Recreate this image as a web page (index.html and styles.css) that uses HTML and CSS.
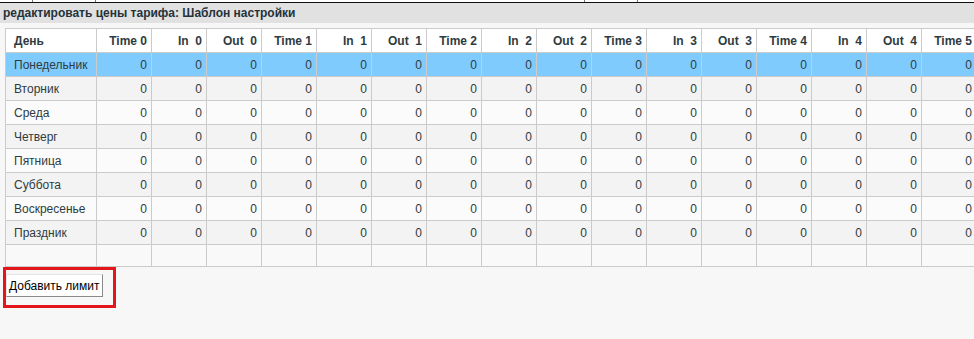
FILE: index.html
```html
<!DOCTYPE html>
<html lang="ru">
<head>
    <meta charset="UTF-8">
    <meta name="viewport" content="width=device-width, initial-scale=1.0">
    <title>Тариф</title>
    <link rel="stylesheet" href="styles.css">
</head>
<body>
    <div id="prev-row">
        <span style="width: 32px"></span>
        <span style="width: 62px"></span>
        <span style="width: 488px"></span>
        <span style="width: 52px"></span>
    </div>

    <div id="panel-title">редактировать цены тарифа: Шаблон настройки</div>

    <div id="grid-wrap">
        <table id="price-grid">
            <colgroup id="grid-cols"></colgroup>
            <thead>
                <tr id="grid-head"></tr>
            </thead>
            <tbody id="grid-body"></tbody>
        </table>
    </div>

    <div id="actions">
        <div class="mark">
            <button type="button" class="add-limit">Добавить лимит</button>
        </div>
    </div>

    <script>
        const days = ['Понедельник', 'Вторник', 'Среда', 'Четверг', 'Пятница', 'Суббота', 'Воскресенье', 'Праздник'];
        // Time/In/Out по периодам, последний период только Time
        const fields = [];
        for (let i = 0; i <= 5; i++) {
            fields.push('Time ' + i);
            if (i < 5) {
                fields.push('In &nbsp;' + i);
                fields.push('Out &nbsp;' + i);
            }
        }

        const cols = document.getElementById('grid-cols');
        const head = document.getElementById('grid-head');
        const body = document.getElementById('grid-body');

        function addCol(width) {
            const col = document.createElement('col');
            col.style.width = width + 'px';
            cols.appendChild(col);
        }

        function addHead(text, cls) {
            const th = document.createElement('th');
            th.innerHTML = text;
            if (cls) th.className = cls;
            head.appendChild(th);
        }

        addCol(91);
        addHead('День', 'day');
        fields.forEach(f => {
            addCol(55);
            addHead(f);
        });

        days.forEach((day, idx) => {
            const tr = document.createElement('tr');
            if (idx === 0) tr.className = 'selected';
            let html = '<td class="day">' + day + '</td>';
            for (let i = 0; i < fields.length; i++) html += '<td>0</td>';
            tr.innerHTML = html;
            body.appendChild(tr);
        });

        // пустая строка для нового дня
        const blank = document.createElement('tr');
        blank.className = 'blank';
        let html = '';
        for (let i = 0; i <= fields.length; i++) html += '<td></td>';
        blank.innerHTML = html;
        body.appendChild(blank);
    </script>
</body>
</html>
```

FILE: styles.css
```css
body {
    margin: 0;
    padding: 0;
    background-color: #f7f7f7;
    font-family: 'Liberation Sans', Arial, sans-serif;
    color: #2f3b40;
    overflow: hidden;
}

#prev-row {
    display: flex;
    height: 2px;
    background-color: #fff;
    border-bottom: 1px solid #111;
}

#prev-row span {
    border-right: 1px solid #777;
}

#panel-title {
    height: 20px;
    line-height: 20px;
    padding-left: 3px;
    background-color: #e1e1e1;
    font-size: 12px;
    font-weight: bold;
    color: #24323a;
    white-space: nowrap;
}

#grid-wrap {
    padding: 5px 0 0 5px;
}

#price-grid {
    border-collapse: collapse;
    table-layout: fixed;
    width: 971px;
    font-size: 12px;
}

#price-grid th,
#price-grid td {
    border: 1px solid #cbcbcb;
    padding: 0 4px;
    text-align: right;
    white-space: nowrap;
    overflow: hidden;
}

#price-grid th {
    height: 23px;
    background-color: #fff;
    font-weight: bold;
}

#price-grid td {
    height: 23px;
}

#price-grid .day {
    text-align: left;
    padding-left: 8px;
}

#price-grid tbody tr {
    background-color: #fbfbfb;
}

#price-grid tbody tr:nth-child(even) {
    background-color: #f3f3f3;
}

#price-grid tbody tr.selected {
    background-color: #80cbfd;
}

#price-grid tbody tr.blank {
    background-color: #f9f9f9;
}

#price-grid tr.blank td {
    height: 21px;
}

#actions {
    padding-left: 3px;
}

.mark {
    display: inline-block;
    border: 3px solid #e3161b;
    padding: 4px 10px 8px 0;
}

.add-limit {
    display: block;
    height: 23px;
    padding: 0 2px;
    background-color: #fff;
    border: 1px solid;
    border-color: #e4e4e4 #8a8a8a #8a8a8a #e4e4e4;
    border-radius: 0;
    font-family: 'Liberation Sans', Arial, sans-serif;
    font-size: 12px;
    color: #000;
    cursor: pointer;
}
```
